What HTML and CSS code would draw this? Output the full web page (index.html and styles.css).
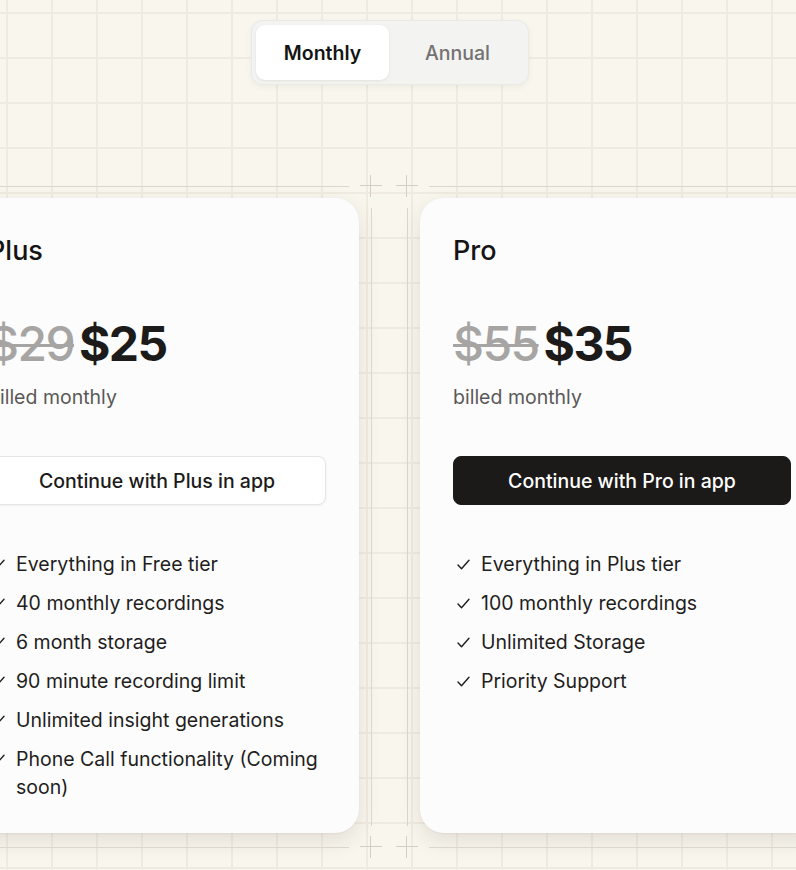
FILE: index.html
```html
<!DOCTYPE html>
<html lang="en">
<head>
<meta charset="utf-8">
<title>Pricing</title>
<link rel="stylesheet" href="styles.css">
</head>
<body>
<div class="page">
  <div class="toggle-wrap">
    <div class="toggle">
      <button class="toggle-opt active">Monthly</button>
      <button class="toggle-opt">Annual</button>
    </div>
  </div>

  <div class="rule">
    <span class="rule-line rule-line-left"></span>
    <span class="plus"></span>
    <span class="plus plus-2"></span>
    <span class="rule-line"></span>
  </div>

  <div class="cards">
    <section class="card">
      <h2 class="card-title">Plus</h2>
      <div class="price">
        <span class="price-old">$29</span>
        <span class="price-new">$25</span>
      </div>
      <p class="billing">billed monthly</p>
      <button class="cta cta-light">Continue with Plus in app</button>
      <ul class="features">
        <li><span class="check"><svg viewBox="0 0 13 11" width="13" height="11"><path d="M1 6 L4.5 9.8 L12 1.2"/></svg></span><span>Everything in Free tier</span></li>
        <li><span class="check"><svg viewBox="0 0 13 11" width="13" height="11"><path d="M1 6 L4.5 9.8 L12 1.2"/></svg></span><span>40 monthly recordings</span></li>
        <li><span class="check"><svg viewBox="0 0 13 11" width="13" height="11"><path d="M1 6 L4.5 9.8 L12 1.2"/></svg></span><span>6 month storage</span></li>
        <li><span class="check"><svg viewBox="0 0 13 11" width="13" height="11"><path d="M1 6 L4.5 9.8 L12 1.2"/></svg></span><span>90 minute recording limit</span></li>
        <li><span class="check"><svg viewBox="0 0 13 11" width="13" height="11"><path d="M1 6 L4.5 9.8 L12 1.2"/></svg></span><span>Unlimited insight generations</span></li>
        <li><span class="check"><svg viewBox="0 0 13 11" width="13" height="11"><path d="M1 6 L4.5 9.8 L12 1.2"/></svg></span><span>Phone Call functionality (Coming soon)</span></li>
      </ul>
    </section>

    <div class="divider"></div>

    <section class="card">
      <h2 class="card-title">Pro</h2>
      <div class="price">
        <span class="price-old">$55</span>
        <span class="price-new">$35</span>
      </div>
      <p class="billing">billed monthly</p>
      <button class="cta cta-dark">Continue with Pro in app</button>
      <ul class="features">
        <li><span class="check"><svg viewBox="0 0 13 11" width="13" height="11"><path d="M1 6 L4.5 9.8 L12 1.2"/></svg></span><span>Everything in Plus tier</span></li>
        <li><span class="check"><svg viewBox="0 0 13 11" width="13" height="11"><path d="M1 6 L4.5 9.8 L12 1.2"/></svg></span><span>100 monthly recordings</span></li>
        <li><span class="check"><svg viewBox="0 0 13 11" width="13" height="11"><path d="M1 6 L4.5 9.8 L12 1.2"/></svg></span><span>Unlimited Storage</span></li>
        <li><span class="check"><svg viewBox="0 0 13 11" width="13" height="11"><path d="M1 6 L4.5 9.8 L12 1.2"/></svg></span><span>Priority Support</span></li>
      </ul>
    </section>
  </div>

  <div class="rule">
    <span class="rule-line rule-line-left"></span>
    <span class="plus"></span>
    <span class="plus plus-2"></span>
    <span class="rule-line"></span>
  </div>
</div>
</body>
</html>
```

FILE: styles.css
```css
* { box-sizing: border-box; }

html, body {
  margin: 0;
  padding: 0;
}

body {
  width: 796px;
  height: 870px;
  overflow: hidden;
  font-family: Inter, "Liberation Sans", sans-serif;
  color: #1c1b1a;
  background-color: #f9f6ee;
  background-image:
    linear-gradient(to right, #f0ebe1 2px, transparent 2px),
    linear-gradient(to bottom, #f0ebe1 2px, transparent 2px);
  background-size: 45px 45px;
  background-position: 6px 12px;
}

.page {
  padding-top: 20px;
}

.toggle-wrap {
  display: flex;
  justify-content: center;
  padding-right: 16px;
}

.toggle {
  display: flex;
  gap: 2px;
  padding: 4px;
  background: #f3f3f2;
  border: 1px solid #ebe9e5;
  border-radius: 12px;
  box-shadow: 0 2px 6px rgba(0, 0, 0, 0.05);
}

.toggle-opt {
  width: 133px;
  height: 55px;
  border: 0;
  border-radius: 9px;
  background: transparent;
  font-family: inherit;
  font-size: 19.5px;
  font-weight: 500;
  color: #737270;
  cursor: pointer;
}

.toggle-opt.active {
  background: #ffffff;
  color: #141414;
  font-weight: 580;
  box-shadow: 0 1px 3px rgba(0, 0, 0, 0.08);
}

.rule {
  display: flex;
  align-items: center;
  height: 22px;
  margin-top: 90px;
}

.rule + .cards { margin-top: 1px; }

.cards + .rule { margin-top: 3px; }

.rule-line {
  flex: 1;
  height: 1px;
  background: #dcd6cb;
}

.rule-line-left {
  flex: none;
  width: 349px;
}

.plus {
  position: relative;
  width: 22px;
  height: 22px;
  margin: 0 11px;
}

.plus-2 { margin-left: 3px; }

.plus::before,
.plus::after {
  content: "";
  position: absolute;
  background: #d3cdc2;
}

.plus::before {
  left: 0;
  right: 0;
  top: 10px;
  height: 1px;
}

.plus::after {
  top: 0;
  bottom: 0;
  left: 10px;
  width: 1px;
}

.cards {
  display: flex;
  width: 869px;
  margin-left: -45px;
}

.divider {
  flex: none;
  width: 37px;
  margin: 10px 12px 7px 12px;
  border-left: 1px solid #dcd6cb;
  border-right: 1px solid #dcd6cb;
}

.card {
  flex: none;
  width: 404px;
  padding: 33px 33px 32px;
  background: #fcfcfc;
  border-radius: 24px;
  box-shadow: 0 1px 2px rgba(0, 0, 0, 0.04), 0 8px 22px rgba(50, 40, 20, 0.11);
}

.card-title {
  margin: 0;
  font-size: 27px;
  line-height: 40px;
  font-weight: 500;
  color: #141414;
}

.price {
  display: flex;
  align-items: baseline;
  gap: 5px;
  margin-top: 44px;
  font-size: 48px;
  line-height: 58px;
  letter-spacing: -1.6px;
}

.price-old {
  color: #a6a5a3;
  font-weight: 500;
  text-decoration: line-through;
  text-decoration-thickness: 3px;
}

.price-new {
  color: #1c1b1a;
  font-weight: 700;
}

.billing {
  margin: 10px 0 0;
  font-size: 19.5px;
  line-height: 28px;
  color: #5a5957;
}

.cta {
  display: block;
  width: 100%;
  height: 49px;
  margin-top: 45px;
  border-radius: 8px;
  font-family: inherit;
  font-size: 19.5px;
  font-weight: 500;
  cursor: pointer;
}

.cta-light {
  background: #ffffff;
  color: #1c1b1a;
  border: 1px solid #e6e5e3;
  box-shadow: 0 1px 3px rgba(0, 0, 0, 0.05);
}

.cta-dark {
  background: #1c1a19;
  color: #ffffff;
  border: 1px solid #1c1a19;
}

.features {
  list-style: none;
  margin: 45px 0 0;
  padding: 0;
  display: flex;
  flex-direction: column;
  gap: 11px;
}

.features li {
  display: flex;
  font-size: 19.5px;
  line-height: 28px;
  color: #1f1e1d;
}

.check {
  flex: none;
  width: 28px;
  padding-left: 4px;
  display: flex;
  align-items: center;
  height: 28px;
}

.check svg {
  fill: none;
  stroke: #1f1e1d;
  stroke-width: 1.4;
  stroke-linecap: round;
  stroke-linejoin: round;
}
```
